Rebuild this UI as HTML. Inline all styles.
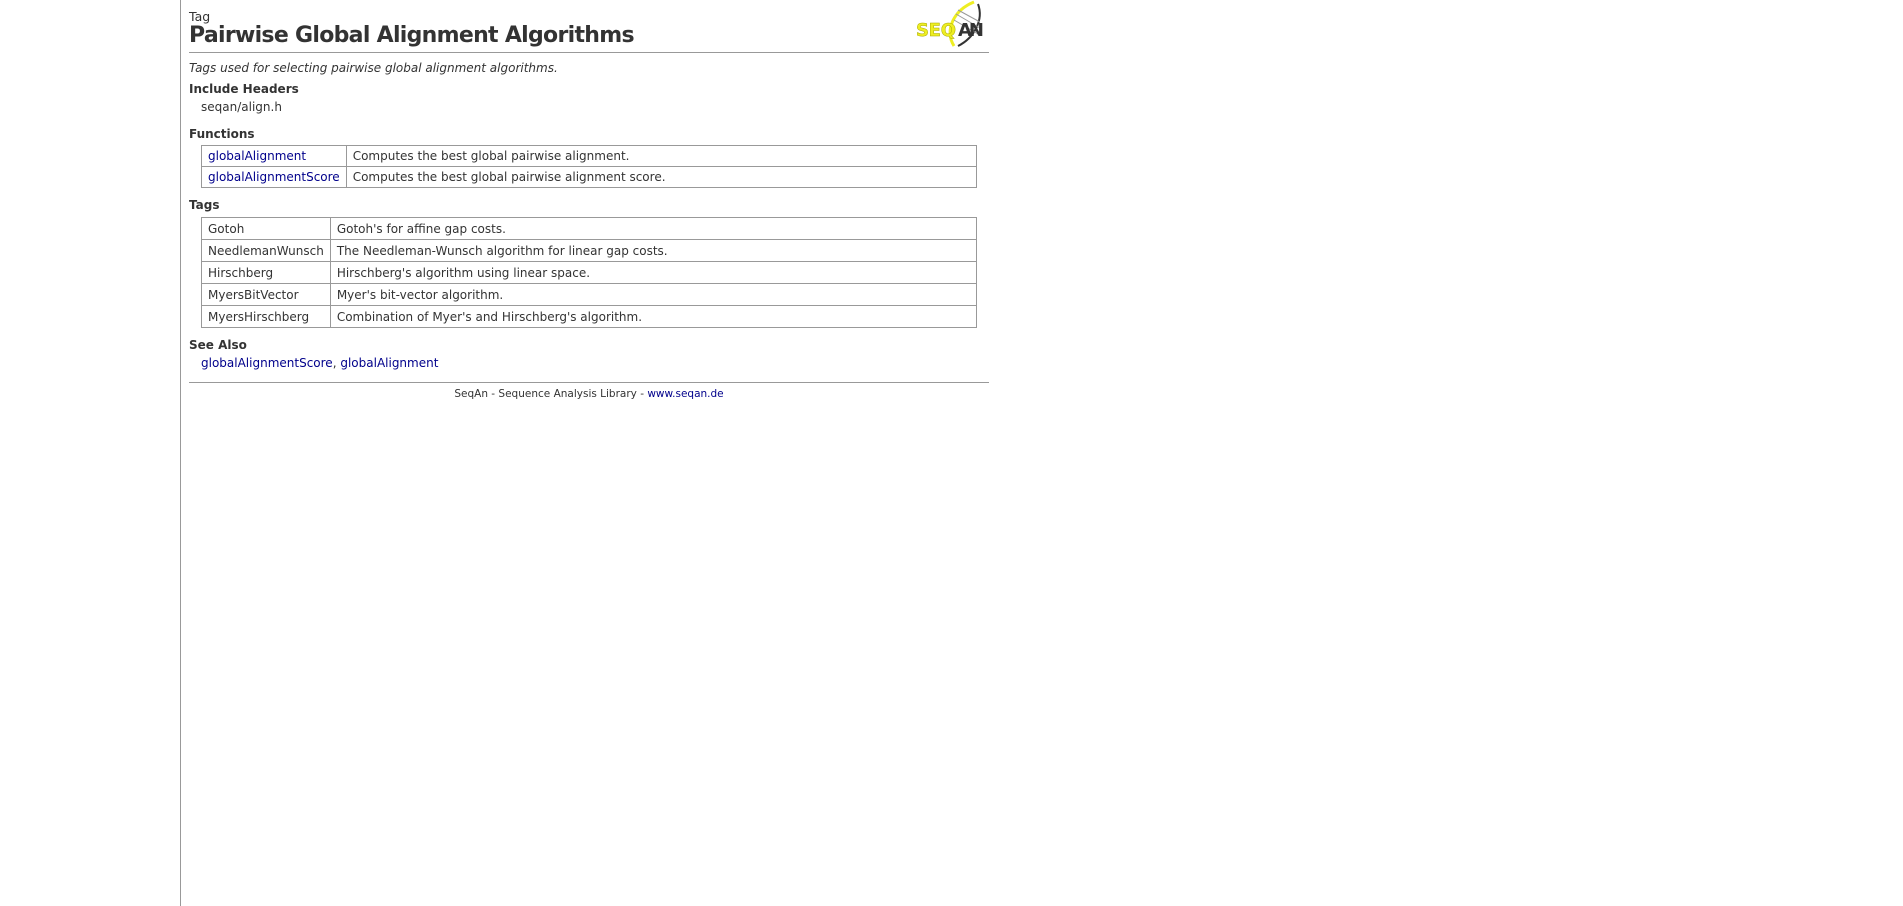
<!DOCTYPE html>
<html><head><meta charset="utf-8"><style>
html,body{margin:0;padding:0;background:#fff;}
body{width:1903px;height:906px;position:relative;overflow:hidden;font-family:"DejaVu Sans","Liberation Sans",sans-serif;font-size:12px;color:#333;}
.vl{position:absolute;left:180px;top:0;width:1px;height:906px;background:#999;}
.a{position:absolute;white-space:nowrap;}
a{color:#00008b;text-decoration:none;}
.hr{position:absolute;left:189px;width:800px;height:1px;background:#999;}
table{position:absolute;border-collapse:collapse;left:201px;width:776px;}
td{border:1px solid #999;padding:0 6px;height:20px;white-space:nowrap;}
.t2 td{height:21px;}
</style></head><body>
<div class="vl"></div>
<div class="a" style="left:189px;top:9px;font-size:12.5px;">Tag</div>
<div class="a" style="left:189px;top:23px;font-size:22px;font-weight:bold;color:#333;letter-spacing:-0.7px;">Pairwise Global Alignment Algorithms</div>
<svg style="position:absolute;left:914px;top:0" width="76" height="50" viewBox="0 0 76 50">
<path d="M60 2 C40 10 30 30 40 46" stroke="#ee2" stroke-width="3" fill="none"/>
<path d="M64 4 C70 20 60 38 44 46" stroke="#333" stroke-width="2" fill="none"/>
<path d="M42 14 L66 28 M40 20 L64 34 M44 10 L66 22" stroke="#999" stroke-width="1"/>
<text x="2" y="36" font-family="DejaVu Sans,sans-serif" font-weight="bold" font-size="18" fill="#ee2" stroke="#aa0" stroke-width="0.5" textLength="40">SEQ</text>
<text x="44" y="36" font-family="DejaVu Sans,sans-serif" font-weight="bold" font-size="18" fill="#333" textLength="26">AN</text>
</svg>
<div class="hr" style="top:52px;"></div>
<div class="a" style="left:189px;top:61px;font-style:italic;">Tags used for selecting pairwise global alignment algorithms.</div>
<div class="a" style="left:189px;top:82px;font-weight:bold;">Include Headers</div>
<div class="a" style="left:201px;top:100px;">seqan/align.h</div>
<div class="a" style="left:189px;top:127px;font-weight:bold;">Functions</div>
<table style="top:145px;">
<tr><td style="width:128px"><a>globalAlignment</a></td><td>Computes the best global pairwise alignment.</td></tr>
<tr><td><a>globalAlignmentScore</a></td><td>Computes the best global pairwise alignment score.</td></tr>
</table>
<div class="a" style="left:189px;top:198px;font-weight:bold;">Tags</div>
<table class="t2" style="top:217px;">
<tr><td style="width:114px">Gotoh</td><td>Gotoh's for affine gap costs.</td></tr>
<tr><td>NeedlemanWunsch</td><td>The Needleman-Wunsch algorithm for linear gap costs.</td></tr>
<tr><td>Hirschberg</td><td>Hirschberg's algorithm using linear space.</td></tr>
<tr><td>MyersBitVector</td><td>Myer's bit-vector algorithm.</td></tr>
<tr><td>MyersHirschberg</td><td>Combination of Myer's and Hirschberg's algorithm.</td></tr>
</table>
<div class="a" style="left:189px;top:338px;font-weight:bold;">See Also</div>
<div class="a" style="left:201px;top:356px;"><a>globalAlignmentScore</a>, <a>globalAlignment</a></div>
<div class="hr" style="top:382px;"></div>
<div class="a" style="left:189px;width:800px;text-align:center;top:388px;font-size:10.5px;">SeqAn - Sequence Analysis Library - <a>www.seqan.de</a></div>
</body></html>
